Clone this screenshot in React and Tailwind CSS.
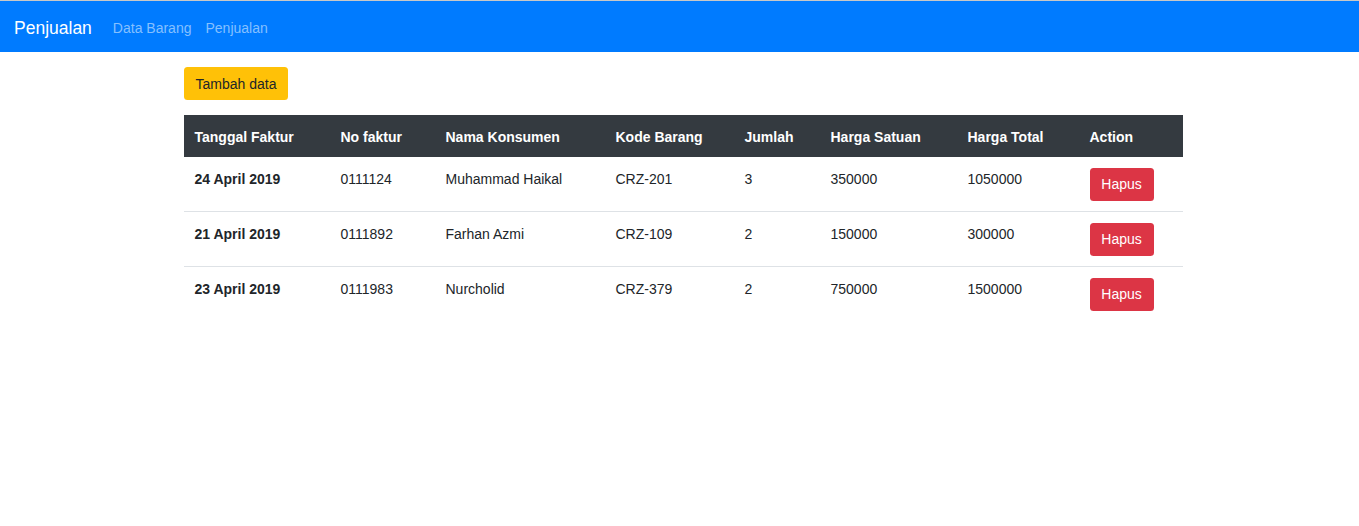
export default function App() {
    const rows = [
        { tanggal: "24 April 2019", faktur: "0111124", nama: "Muhammad Haikal", kode: "CRZ-201", jumlah: "3", satuan: "350000", total: "1050000" },
        { tanggal: "21 April 2019", faktur: "0111892", nama: "Farhan Azmi", kode: "CRZ-109", jumlah: "2", satuan: "150000", total: "300000" },
        { tanggal: "23 April 2019", faktur: "0111983", nama: "Nurcholid", kode: "CRZ-379", jumlah: "2", satuan: "750000", total: "1500000" },
    ];

    // lebar kolom mengikuti tabel asli
    const cols = [
        { label: "Tanggal Faktur", w: "w-[146px]" },
        { label: "No faktur", w: "w-[105px]" },
        { label: "Nama Konsumen", w: "w-[170px]" },
        { label: "Kode Barang", w: "w-[129px]" },
        { label: "Jumlah", w: "w-[86px]" },
        { label: "Harga Satuan", w: "w-[137px]" },
        { label: "Harga Total", w: "w-[122px]" },
        { label: "Action", w: "w-[104px]" },
    ];

    const td = "px-[10.5px] pt-[11.5px] pb-[9.5px] align-top";

    return (
        <div className="min-h-screen bg-white text-[14px] leading-[21px] text-[#212529] font-['Liberation_Sans',Arial,sans-serif]">
            {/* Navbar */}
            <div className="h-px bg-[#c8c8c8]" />
            <nav className="flex h-[51px] items-center bg-[#007bff] px-[14px] pt-[3px]">
                <span className="mr-[21px] text-[17.5px] leading-[26px] text-white">Penjualan</span>
                <a className="mr-[14px] leading-[26px] text-[#85c0ff]">Data Barang</a>
                <a className="leading-[26px] text-[#85c0ff]">Penjualan</a>
            </nav>

            <div className="ml-[184px] w-[999px] pt-[15px]">
                <button
                    type="button"
                    className="h-[33px] w-[104px] rounded-[3.5px] bg-[#ffc107] pt-px text-[#212529]"
                >
                    Tambah data
                </button>

                <table className="mt-[15px] w-full table-fixed border-collapse">
                    <thead>
                        <tr className="bg-[#343a40] text-white">
                            {cols.map((c) => (
                                <th key={c.label} className={`${c.w} h-[42px] px-[10.5px] pt-[2px] text-left font-bold`}>
                                    {c.label}
                                </th>
                            ))}
                        </tr>
                    </thead>
                    <tbody>
                        {rows.map((r, i) => (
                            <tr key={r.faktur} className={i > 0 ? "border-t border-[#dee2e6]" : ""}>
                                <td className={`${td} font-bold`}>{r.tanggal}</td>
                                <td className={td}>{r.faktur}</td>
                                <td className={td}>{r.nama}</td>
                                <td className={td}>{r.kode}</td>
                                <td className={td}>{r.jumlah}</td>
                                <td className={td}>{r.satuan}</td>
                                <td className={td}>{r.total}</td>
                                <td className="px-[10.5px] py-[10.5px] align-top">
                                    <button
                                        type="button"
                                        className="block h-[33px] w-[64px] rounded-[3.5px] bg-[#dc3545] pt-px text-white"
                                    >
                                        Hapus
                                    </button>
                                </td>
                            </tr>
                        ))}
                    </tbody>
                </table>
            </div>
        </div>
    );
}
